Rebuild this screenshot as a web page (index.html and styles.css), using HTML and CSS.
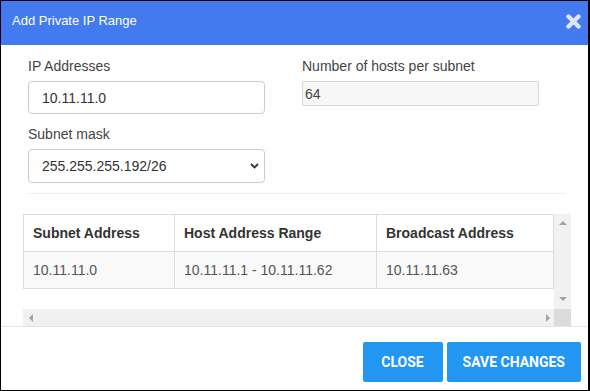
FILE: index.html
```html
<!DOCTYPE html>
<html lang="en">
<head>
  <meta charset="UTF-8">
  <meta name="viewport" content="width=device-width, initial-scale=1.0">
  <title>Add Private IP Range</title>
  <link rel="stylesheet" href="styles.css">
</head>
<body>
  <div class="modal">
    <div class="modal-header">
      <span class="modal-title">Add Private IP Range</span>
      <button type="button" class="close-btn" aria-label="Close">
        <svg width="15" height="15" viewBox="0 0 15 15">
          <path d="M2.5 2.5 L12.5 12.5 M12.5 2.5 L2.5 12.5" stroke="#dde6fc" stroke-width="4.4" stroke-linecap="round" fill="none"/>
        </svg>
      </button>
    </div>

    <div class="modal-body">
      <div class="form-row">
        <div class="form-col">
          <div class="form-group">
            <label class="form-label" for="ip">IP Addresses</label>
            <input type="text" id="ip" class="form-control" value="10.11.11.0">
          </div>
          <div class="form-group">
            <label class="form-label" for="mask">Subnet mask</label>
            <div class="select-wrap">
              <select id="mask" class="form-control form-select">
                <option>255.255.255.192/26</option>
              </select>
              <svg class="chevron" width="9" height="6" viewBox="0 0 9 6">
                <path d="M1 1 L4.5 4.5 L8 1" stroke="#333" stroke-width="1.8" fill="none"/>
              </svg>
            </div>
          </div>
        </div>
        <div class="form-col">
          <div class="form-group">
            <label class="form-label" for="hosts">Number of hosts per subnet</label>
            <input type="text" id="hosts" class="form-control form-readonly" value="64" readonly>
          </div>
        </div>
      </div>

      <hr class="divider">

      <div class="table-scroll">
        <div class="table-view">
          <table class="subnet-table">
            <colgroup>
              <col style="width: 151px">
              <col style="width: 202px">
              <col style="width: 177px">
            </colgroup>
            <thead>
              <tr>
                <th>Subnet Address</th>
                <th>Host Address Range</th>
                <th>Broadcast Address</th>
              </tr>
            </thead>
            <tbody>
              <tr>
                <td>10.11.11.0</td>
                <td>10.11.11.1 - 10.11.11.62</td>
                <td>10.11.11.63</td>
              </tr>
            </tbody>
          </table>
        </div>
        <div class="scrollbar scrollbar-v">
          <span class="arrow arrow-up"></span>
          <span class="arrow arrow-down"></span>
        </div>
        <div class="scrollbar scrollbar-h">
          <span class="arrow arrow-left"></span>
          <span class="arrow arrow-right"></span>
        </div>
        <div class="scroll-corner"></div>
      </div>
    </div>

    <div class="modal-footer">
      <button type="button" class="btn">Close</button>
      <button type="button" class="btn">Save changes</button>
    </div>
  </div>
</body>
</html>
```

FILE: styles.css
```css
* {
  box-sizing: border-box;
  margin: 0;
  padding: 0;
}

body {
  font-family: "Liberation Sans", Arial, sans-serif;
  font-size: 14px;
  color: #333;
  background: #fff;
}

.modal {
  width: 590px;
  height: 391px;
  border: 1px solid #000;
  border-right-width: 2px;
  background: #fff;
  display: flex;
  flex-direction: column;
}

.modal-header {
  height: 44px;
  flex: none;
  background-color: #437af0;
  padding: 9px 7px 0 11px;
  display: flex;
  justify-content: space-between;
  align-items: flex-start;
}

.modal-title {
  color: #fff;
  font-size: 13px;
  line-height: 21px;
}

.close-btn {
  background: none;
  border: none;
  margin-top: 4px;
  display: flex;
  cursor: pointer;
}

.modal-body {
  flex: 1;
  min-height: 0;
  padding: 11px 0 0 22px;
  display: flex;
  flex-direction: column;
}

.form-row {
  display: grid;
  grid-template-columns: 237px 237px;
  column-gap: 37px;
  margin-left: 5px;
}

.form-group + .form-group {
  margin-top: 10px;
}

.form-label {
  display: block;
  font-size: 14px;
  line-height: 20px;
  color: #444;
  margin-bottom: 5px;
}

.form-control {
  display: block;
  width: 237px;
  height: 33px;
  border: 1px solid #ccc;
  border-radius: 4px;
  padding: 0 13px;
  font-family: inherit;
  font-size: 14px;
  color: #333;
  background: #fff;
  outline: none;
}

.select-wrap {
  position: relative;
  width: 237px;
}

.form-select {
  height: 34px;
  appearance: none;
  -webkit-appearance: none;
}

.chevron {
  position: absolute;
  right: 6px;
  top: 14px;
  pointer-events: none;
}

.form-readonly {
  height: 25px;
  padding: 0 2px;
  background: #f7f7f7;
  border-color: #d6d6d6;
  border-radius: 2px;
  color: #444;
}

.divider {
  width: 538px;
  margin: 10px 0 20px 5px;
  border: 0;
  border-top: 1px solid #eee;
}

/* table with scrollbars */
.table-scroll {
  width: 548px;
  flex: 1;
  min-height: 0;
  display: grid;
  grid-template-columns: 1fr 17px;
  grid-template-rows: 1fr 17px;
}

.table-view {
  overflow: hidden;
}

.subnet-table {
  width: 530px;
  table-layout: fixed;
  border-collapse: collapse;
}

.subnet-table th,
.subnet-table td {
  border: 1px solid #ddd;
  padding: 8px 9px;
  line-height: 20px;
  text-align: left;
  white-space: nowrap;
}

.subnet-table th {
  font-weight: bold;
  color: #333;
  background: #fff;
}

.subnet-table td {
  color: #555;
  background: #f9f9f9;
}

.scrollbar {
  background: #f1f1f1;
  display: flex;
  justify-content: space-between;
  align-items: center;
}

.scrollbar-v {
  flex-direction: column;
  padding: 7px 0 8px;
}

.scrollbar-h {
  padding: 0 4px 0 6px;
}

.scroll-corner {
  background: #dcdcdc;
}

.arrow {
  width: 0;
  height: 0;
  border: 4px solid transparent;
}

.arrow-up {
  border-top-width: 0;
  border-bottom-color: #a3a3a3;
}

.arrow-down {
  border-bottom-width: 0;
  border-top-color: #a3a3a3;
}

.arrow-left {
  border-left-width: 0;
  border-right-color: #a3a3a3;
}

.arrow-right {
  border-right-width: 0;
  border-left-color: #a3a3a3;
}

.modal-footer {
  height: 64px;
  flex: none;
  border-top: 1px solid #e5e5e5;
  padding: 15px 7px 0 0;
  display: flex;
  justify-content: flex-end;
  align-items: flex-start;
  gap: 4px;
}

.btn {
  height: 40px;
  min-width: 80px;
  padding: 0 16px;
  background-color: #2196f3;
  color: #fff;
  border: none;
  border-radius: 2px;
  font-family: Roboto, "Liberation Sans", sans-serif;
  font-weight: bold;
  font-size: 14px;
  text-transform: uppercase;
  cursor: pointer;
}
```
